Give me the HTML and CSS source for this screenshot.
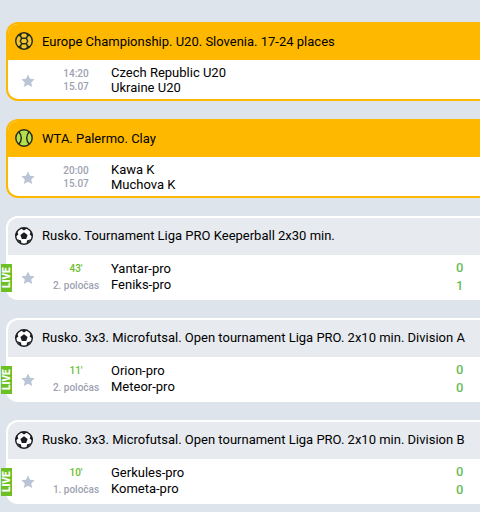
FILE: index.html
```
<!DOCTYPE html>
<html lang="cs">
<head>
    <meta charset="UTF-8">
    <title>Live</title>
    <link rel="stylesheet" href="styles.css">
</head>
<body>
<!-- shared icons -->
<svg class="sprite" aria-hidden="true">
    <symbol id="icon-star" viewBox="0 0 14 14">
        <path fill="#b9c5d6" d="M7 .4l2 4.300 4.700.5-3.500 3.200 1 4.700L7 10.800l-4.200 2.300 1-4.700L.3 5.200 5 4.700z"/>
    </symbol>
    <symbol id="icon-football" viewBox="0 0 20 20">
        <circle cx="10" cy="10" r="8.300" fill="#fff" stroke="#1b1d22" stroke-width="1.400"/>
        <path fill="#1b1d22" d="M10 6.300l3.600 2.600-1.400 4.200H7.800L6.400 8.900z"/>
        <path fill="#1b1d22" d="M6 1.800h8L10 4.500zM17.300 4.800l1.600 6.200-3.300-2.400zM2.700 4.800l1.700 3.800-3.300 2.400zM17.300 12.900l-5 5.500.7-4zM2.700 12.900l5 5.500-.7-4z"/>
    </symbol>
    <symbol id="icon-handball" viewBox="0 0 20 20">
        <g fill="none" stroke="#22291f" stroke-width="1.400">
            <circle cx="10" cy="10" r="8.300" fill="#f2c52c"/>
            <path d="M7.500 2.200L6.300 4.700l1.400 2.600L6.300 10l1.400 2.700-1.400 2.600 1.200 2.500M12.500 2.200l1.200 2.500-1.400 2.600 1.400 2.700-1.400 2.700 1.400 2.600-1.200 2.500M7.700 7.300h4.600M7.700 12.700h4.600M6.300 4.700l-2.100-.4M13.700 4.700l2.100-.4M6.300 15.300l-2.100.4M13.700 15.300l2.100.4"/>
        </g>
    </symbol>
    <symbol id="icon-tennis" viewBox="0 0 20 20">
        <g fill="#b5e04c" stroke="#22291f" stroke-width="1.400">
            <circle cx="10" cy="10" r="8.200"/>
            <path fill="none" d="M4.700 3.800c3.500 3.700 3.500 8.700 0 12.400M15.300 3.800c-3.500 3.700-3.500 8.700 0 12.400"/>
        </g>
    </symbol>
</svg>

<main class="events">
    <section class="card card-top">
        <h2 class="card-title"><svg class="sport"><use href="#icon-handball"/></svg>Europe Championship. U20. Slovenia. 17-24 places</h2>
        <div class="event">
            <button class="star" type="button" aria-label="Oblíbené"><svg><use href="#icon-star"/></svg></button>
            <div class="time"><span>14:20</span><span>15.07</span></div>
            <div class="teams"><span>Czech Republic U20</span><span>Ukraine U20</span></div>
        </div>
    </section>

    <section class="card card-top">
        <h2 class="card-title"><svg class="sport"><use href="#icon-tennis"/></svg>WTA. Palermo. Clay</h2>
        <div class="event">
            <button class="star" type="button" aria-label="Oblíbené"><svg><use href="#icon-star"/></svg></button>
            <div class="time"><span>20:00</span><span>15.07</span></div>
            <div class="teams"><span>Kawa K</span><span>Muchova K</span></div>
        </div>
    </section>

    <section class="card card-live">
        <h2 class="card-title"><svg class="sport"><use href="#icon-football"/></svg>Rusko. Tournament Liga PRO Keeperball 2x30 min.</h2>
        <div class="event">
            <span class="live">LIVE</span>
            <button class="star" type="button" aria-label="Oblíbené"><svg><use href="#icon-star"/></svg></button>
            <div class="time"><span class="minute">43'</span><span>2. poločas</span></div>
            <div class="teams"><span>Yantar-pro</span><span>Feniks-pro</span></div>
            <div class="score"><span>0</span><span>1</span></div>
        </div>
    </section>

    <section class="card card-live">
        <h2 class="card-title"><svg class="sport"><use href="#icon-football"/></svg>Rusko. 3x3. Microfutsal. Open tournament Liga PRO. 2x10 min. Division A</h2>
        <div class="event">
            <span class="live">LIVE</span>
            <button class="star" type="button" aria-label="Oblíbené"><svg><use href="#icon-star"/></svg></button>
            <div class="time"><span class="minute">11'</span><span>2. poločas</span></div>
            <div class="teams"><span>Orion-pro</span><span>Meteor-pro</span></div>
            <div class="score"><span>0</span><span>0</span></div>
        </div>
    </section>

    <section class="card card-live">
        <h2 class="card-title"><svg class="sport"><use href="#icon-football"/></svg>Rusko. 3x3. Microfutsal. Open tournament Liga PRO. 2x10 min. Division B</h2>
        <div class="event">
            <span class="live">LIVE</span>
            <button class="star" type="button" aria-label="Oblíbené"><svg><use href="#icon-star"/></svg></button>
            <div class="time"><span class="minute">10'</span><span>1. poločas</span></div>
            <div class="teams"><span>Gerkules-pro</span><span>Kometa-pro</span></div>
            <div class="score"><span>0</span><span>0</span></div>
        </div>
    </section>
</main>
</body>
</html>
```

FILE: styles.css
```
* {
    box-sizing: border-box;
}
body {
    margin: 0;
    background: #dde4ec;
    color: #000;
    font-family: Roboto, Arial, sans-serif;
    font-size: 13px;
}
.sprite {
    display: none;
}
.events {
    display: flex;
    flex-direction: column;
    gap: 18px;
    padding: 22px 0 8px 6px;
}
.card {
    background: #fff;
    border: 2px solid #fff;
    border-right: 0;
    border-radius: 12px 0 0 12px;
}
.card-title {
    display: flex;
    align-items: center;
    gap: 8px;
    height: 37px;
    margin: 0;
    padding: 0 0 2px 6px;
    border-radius: 10px 0 0 0;
    background: #e7eaef;
    font-size: 13px;
    font-weight: 400;
    white-space: nowrap;
}
.card-top {
    border-color: #ffb800;
}
.card-top .card-title {
    height: 36px;
    background: #ffb800;
}
.sport {
    width: 20px;
    height: 20px;
}
.event {
    position: relative;
    display: grid;
    grid-template-columns: 40px 56px 1fr 32px;
    align-items: center;
    min-height: 39px;
}
.card-live .event {
    min-height: 43px;
}
.star {
    display: flex;
    justify-content: center;
    padding: 2px 0 0;
    border: 0;
    background: none;
    cursor: pointer;
}
.star svg {
    width: 14px;
    height: 14px;
}
.time,
.teams,
.score {
    display: flex;
    flex-direction: column;
}
.time {
    align-items: center;
    color: #9da2b1;
    font-size: 10px;
    font-weight: 500;
    line-height: 13px;
}
.card-live .time {
    line-height: 17px;
}
.time .minute {
    color: #6bbd2f;
}
.teams {
    padding-left: 7px;
    line-height: 15px;
}
.card-live .teams {
    line-height: 16px;
}
.score {
    padding-left: 8px;
    color: #6bbd5a;
    font-weight: 500;
    line-height: 18px;
}
.live {
    position: absolute;
    left: -7px;
    top: 9px;
    width: 11px;
    height: 28px;
    background: #6cc024;
    color: #fff;
    font-size: 10px;
    font-weight: 900;
    line-height: 11px;
    text-align: center;
    writing-mode: vertical-rl;
    transform: rotate(180deg);
}
```
